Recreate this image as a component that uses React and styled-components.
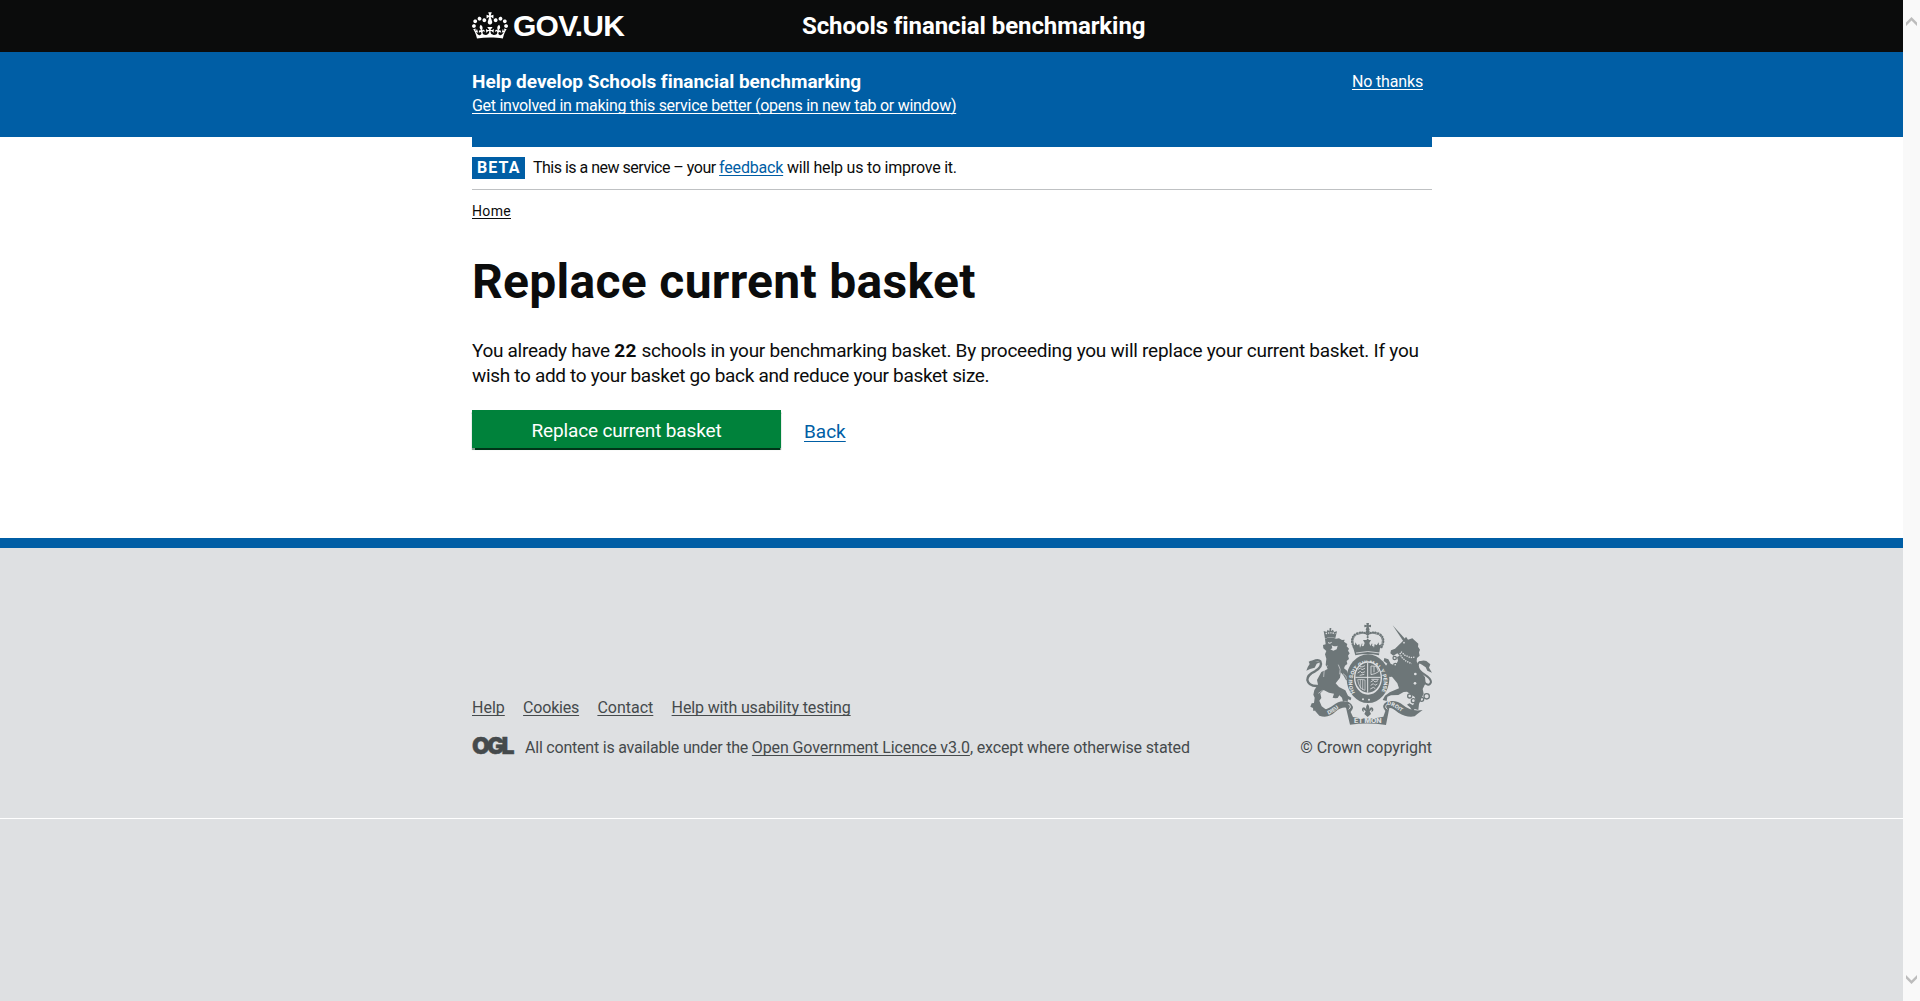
import React from 'react';
import styled, { createGlobalStyle } from 'styled-components';

const GlobalStyle = createGlobalStyle`
  * { box-sizing: border-box; }
  body { margin: 0; background: #dee0e2; color: #0b0c0c; font-family: Roboto, "Liberation Sans", sans-serif; overflow: hidden; }
  h1, p, ul { margin: 0; padding: 0; }
`;

const Window = styled.div`
  display: grid;
  grid-template-columns: 1fr 17px;
  height: 1001px;
`;

const Page = styled.div`
  display: flex;
  flex-direction: column;
  background: #dee0e2;
  min-width: 0;
`;

const T = styled.span`
  letter-spacing: ${p => p.$ls || 0}px;
  white-space: nowrap;
`;

const Link = styled.a`
  color: ${p => p.$color || '#005ea5'};
  letter-spacing: ${p => p.$ls || 0}px;
  text-decoration: underline;
  text-decoration-thickness: 1px;
  text-underline-offset: ${p => p.$offset || 2}px;
  text-decoration-skip-ink: none;
  white-space: nowrap;
`;

const Header = styled.header`
  display: flex;
  flex: none;
  height: 52px;
  padding-left: 472px;
  background: #0b0c0c;
  color: #fff;
`;

const Brand = styled.a`
  display: flex;
  width: 330px;
  padding-top: 12px;
  gap: 5px;
  font: bold 30px/27px "Liberation Sans", Arial, sans-serif;
  letter-spacing: -0.75px;
`;

const ServiceName = styled.div`
  padding-top: 11px;
  font-size: 24px;
  line-height: 30px;
  font-weight: 700;
  letter-spacing: -0.08px;
`;

const Recruitment = styled.section`
  display: flex;
  flex: none;
  justify-content: space-between;
  height: 85px;
  padding: 18px 480px 0 472px;
  background: #005ea5;
  color: #fff;
  font-size: 16px;
  line-height: 24px;
`;

const RecruitmentTitle = styled.div`
  font-size: 19px;
  font-weight: 700;
  letter-spacing: -0.01px;
`;

const Main = styled.main`
  flex: none;
  height: 401px;
  padding: 0 471px 0 472px;
  background: #fff;
`;

const BlueBar = styled.div`
  height: 10px;
  background: #005ea5;
`;

const Phase = styled.div`
  display: flex;
  align-items: center;
  gap: 8px;
  height: 43px;
  border-bottom: 1px solid #bfc1c3;
  font-size: 16px;
  line-height: 22px;
`;

const Tag = styled.strong`
  width: 53px;
  height: 22px;
  padding-left: 5px;
  background: #005ea5;
  color: #fff;
  letter-spacing: 1.1px;
`;

const Crumbs = styled.nav`
  padding-top: 11px;
  font-size: 14px;
  line-height: 20px;
`;

const Title = styled.h1`
  padding-top: 36px;
  font-size: 48px;
  line-height: 50px;
  letter-spacing: 0.3px;
`;

const Body = styled.p`
  padding-top: 31px;
  font-size: 19px;
  line-height: 25px;
`;

const Actions = styled.div`
  display: flex;
  gap: 23px;
  padding-top: 22px;
  font-size: 19px;
`;

const Button = styled.button`
  width: 309px;
  height: 38px;
  padding: 3px 0 0;
  border: 0;
  background: #00823b;
  box-shadow: 0 1.5px 1px #003418;
  color: #fff;
  font: inherit;
  letter-spacing: -0.15px;
`;

const BackSlot = styled.div`
  padding-top: 9px;
  line-height: 25px;
`;

const Footer = styled.footer`
  display: flex;
  flex: none;
  justify-content: space-between;
  height: 281px;
  padding: 75px 471px 0 472px;
  border-top: 10px solid #005ea5;
  border-bottom: 1px solid #fff;
  background: #dee0e2;
  color: #454a4c;
  font-size: 16px;
  line-height: 20px;
`;

const FooterMeta = styled.div`
  padding-top: 75px;
`;

const FooterLinks = styled.div`
  display: flex;
  gap: 18.3px;
`;

const Licence = styled.div`
  display: flex;
  padding-top: 20px;
`;

const Ogl = styled.span`
  width: 53px;
  font: 900 23px/17px Inter, Roboto, sans-serif;
  letter-spacing: -2.9px;
  -webkit-text-stroke: 0.4px #454a4c;
`;

const Copyright = styled.div`
  display: flex;
  flex-direction: column;
  align-items: flex-end;
  gap: 12px;
`;

const Scrollbar = styled.div`
  display: flex;
  flex-direction: column;
  justify-content: space-between;
  align-items: center;
  padding: 17px 0;
  background: #f9f9f9;
`;

const Crown = () => (
  <svg width="36" height="27" viewBox="0 0 132 97" fill="#fff" aria-hidden="true">
    <path d="M25 30.2c3.5 1.5 7.7-.2 9.1-3.7 1.5-3.6-.2-7.8-3.9-9.2-3.6-1.4-7.6.3-9.1 3.9-1.4 3.5.3 7.5 3.9 9zM9 39.5c3.6 1.5 7.8-.2 9.2-3.7 1.5-3.6-.2-7.8-3.9-9.1-3.6-1.5-7.6.2-9.1 3.8-1.4 3.5.3 7.5 3.8 9zM4.4 57.2c3.5 1.5 7.7-.2 9.1-3.8 1.5-3.6-.2-7.7-3.9-9.1-3.5-1.5-7.6.3-9.1 3.8-1.4 3.5.3 7.6 3.9 9.1zm38.3-21.4c3.5 1.5 7.7-.2 9.1-3.8 1.5-3.6-.2-7.7-3.9-9.1-3.6-1.5-7.6.3-9.1 3.8-1.3 3.6.4 7.7 3.9 9.1zm64.4-5.6c-3.6 1.5-7.8-.2-9.1-3.7-1.5-3.6.2-7.8 3.8-9.2 3.6-1.4 7.7.3 9.2 3.9 1.3 3.5-.4 7.5-3.9 9zm15.9 9.3c-3.6 1.5-7.7-.2-9.1-3.7-1.5-3.6.2-7.8 3.7-9.1 3.6-1.5 7.7.2 9.2 3.8 1.5 3.5-.3 7.5-3.8 9zm4.7 17.7c-3.6 1.5-7.8-.2-9.2-3.8-1.5-3.6.2-7.7 3.9-9.1 3.6-1.5 7.7.3 9.2 3.8 1.3 3.5-.4 7.6-3.9 9.1zM89.3 35.8c-3.6 1.5-7.8-.2-9.2-3.8-1.4-3.6.2-7.7 3.9-9.1 3.6-1.5 7.7.3 9.2 3.8 1.4 3.6-.3 7.7-3.9 9.1zM69.7 17.7l8.9 4.7V9.3l-8.9 2.8c-.2-.3-.5-.6-.9-.9L72.4 0H59.6l3.5 11.2c-.3.3-.6.5-.9.9l-8.8-2.8v13.1l8.8-4.7c.3.3.6.7.9.9l-5 15.4v.1c-.2.8-.4 1.6-.4 2.4 0 4.1 3.1 7.5 7 8.1h.2c.3 0 .7.1 1 .1.4 0 .7 0 1-.1h.2c4-.6 7.1-4.1 7.1-8.1 0-.8-.1-1.7-.4-2.4V34l-5.1-15.4c.4-.2.7-.6 1-.9zM66 92.8c16.9 0 32.8 1.1 47.1 3.2 4-16.9 8.9-26.7 14-33.5l-9.6-3.4c1 4.9 1.1 7.2 0 10.2-1.5-1.4-3-4.3-4.2-8.7L108.6 76c2.8-2 5-3.2 7.5-3.3-4.4 9.4-10 11.9-13.6 11.2-4.3-.8-6.3-4.6-5.6-7.9 1-4.7 5.7-5.9 8-.5 4.3-8.7-3-11.4-7.6-8.8 7.1-7.2 7.9-13.5 2.1-21.1-8 6.1-8.1 12.3-4.5 20.8-4.7-5.4-12.1-2.5-9.5 6.2 3.4-5.2 7.9-2 7.2 3.1-.6 4.3-6.4 7.8-13.5 7.2-10.3-.9-10.9-8-11.2-13.8 2.5-.5 7.1 1.8 11 7.3L80.2 60c-4.1 4.4-8 5.3-12.3 5.4 1.4-4.4 8-11.6 8-11.6H55.5s6.4 7.2 7.9 11.6c-4.2-.1-8-1-12.3-5.4l1.4 16.4c3.9-5.5 8.5-7.7 10.9-7.3-.3 5.8-.9 12.8-11.1 13.8-7.2.6-12.9-2.9-13.5-7.2-.7-5 3.8-8.3 7.1-3.1 2.7-8.7-4.6-11.6-9.4-6.2 3.7-8.5 3.6-14.7-4.6-20.8-5.8 7.6-5 13.9 2.2 21.1-4.7-2.6-11.9.1-7.7 8.8 2.3-5.5 7.1-4.2 8.1.5.7 3.3-1.3 7.1-5.7 7.9-3.5.7-9-1.8-13.5-11.2 2.5.1 4.7 1.3 7.5 3.3l-4.7-15.4c-1.2 4.4-2.7 7.2-4.3 8.7-1.1-3-.9-5.3 0-10.2l-9.5 3.4c5 6.9 9.9 16.7 14 33.5 14.8-2.1 30.8-3.2 47.7-3.2z" />
  </svg>
);

const ink = '#6d7678';
const paper = '#dee0e2';

const Crest = () => (
  <svg width="126" height="103" viewBox="79 38 378 309" fill={ink} aria-hidden="true">
    {/* royal crown */}
    <path d="M260 38h8l-1 7 7-2v8l-7-2 3 10h-12l3-10-7 2v-8l7 2z" />
    <circle cx="264" cy="64" r="6" />
    <path d="M264 72Q250 62 230 70Q207 84 224 114M264 72Q278 62 298 70Q321 84 304 114" fill="none" stroke={ink} strokeWidth="6" strokeLinecap="round" strokeDasharray="2 6" />
    <path d="M264 72Q250 64 231 73Q211 86 227 114M264 72Q278 64 297 73Q317 86 301 114" fill="none" stroke={ink} strokeWidth="2.5" />
    <path d="M264 72V96" fill="none" stroke={ink} strokeWidth="6" strokeLinecap="round" strokeDasharray="1 7" />
    <path d="M221 114L218 101l8 4 1-9 6 9 6-4 2 11 6-13 5 8 3-9-5-9h24l-5 9 3 9 5-8 6 13 2-11 6 4 6-9 1 9 8-4-5 13-3 21Q264 127 227 135z" />
    <path d="M229 128Q264 119 301 128" fill="none" stroke={paper} strokeWidth="2.5" />
    <circle cx="249" cy="105" r="3" fill={paper} /><circle cx="280" cy="105" r="3" fill={paper} />

    {/* lion */}
    <path d="M132 62l9 3 3-7 5 5 1-10h5l-1 9 6-4 3 7 9-2-5 20q-16-5-31 2z" />
    <path d="M138 70q14-5 29 0" fill="none" stroke={paper} strokeWidth="4" strokeDasharray="4 3" />
    <path d="M136 86q16-8 33-1l9-1 9 5 8-1-2 6 10 7-2 7 7 7-3 6 5 8-5 7 3 10-7 6 2 9-7 5-3 8 9 7 3 10 10 2-4 6 6 5-8 2-2 5-8-2-7-13-9-10-2 16-13 17 10 11 19 10 8 16 10 6-2 8-8-3-1 8-8-4-6 3-3-12-8-7-5 8-7 1-8-2 4-12-15-3-16-8-10 10 3 14-6 8 7 17 14 10-9 8-9-5-5 7-9-8-7 2-1-9-8-4 4-10 7-1 2-16-4-9 3-14 11-16-3-14 13-24 19-9-6-12 2-19-4-13 4-10-9-8-1-10 8-2z" />
    <path d="M113 227Q87 228 83 209Q83 193 106 183Q130 169 122 153Q116 146 101 153" fill="none" stroke={ink} strokeWidth="7" strokeLinecap="round" />
    <path d="M80 181q5-14 10-20l-3-7q12-6 20-1l17 1-13 6-6 12-14 4z" />
    <path d="M156 104q6 7 18 2l-3 11-10 4-9-4 6-3z" fill={paper} />
    <path d="M145 97q6 4 11-1" fill="none" stroke={paper} strokeWidth="3" />
    <path d="M143 165q-14 20-11 35M176 163q9 14 4 29M116 249l13-9M190 190q12 6 11 17" fill="none" stroke={paper} strokeWidth="2" />

    {/* unicorn */}
    <path d="M339 45l41 45-8 4z" />
    <path d="M372 90l7-11 6 9 13-4 9 8 9 8-1 9 6 9-3 8 2 10-8 7-1 9 5 17 4 9 16 23 2 17-9 18 3 14-6 12-8 19-2 18-11-3-6 8-8-13-9-8 7-4 11 6 8-15-3-10-23-16-10 1-16 9-22 1-11 4-2 13-12-3 7-13 14-10 28-12-5-15-16-20-7 1-13-9-7 13-9 6-7-4 10-7 4-12-11-7-9-15-11-3 4-6 12 3 7-3 18 12 5-8-11-8 2-9 12 4 7 13 14 6 8-15-3-11 8-4-7-7-12 7-9-7 2-9 12-5z" />
    <path d="M429 213Q449 232 454 215Q453 204 435 193Q411 178 415 161Q418 151 431 157" fill="none" stroke={ink} strokeWidth="6" />
    <path d="M416 157q10-9 24-5l12 10-4 10 9 15-14-6-5-10-11-8z" />
    <path d="M361 128l5 13 14 12 16 7M364 124l12 11 17 7 14-2" fill="none" stroke={paper} strokeWidth="4" strokeDasharray="4 3" />
    <circle cx="373" cy="97" r="2.5" fill={paper} />
    <g fill="none" stroke={ink} strokeWidth="4">
      <circle cx="390" cy="257" r="6" /><circle cx="401" cy="271" r="6" /><circle cx="426" cy="267" r="6" /><circle cx="441" cy="258" r="8" />
      <circle cx="345" cy="143" r="5" /><circle cx="347" cy="164" r="5" /><circle cx="337" cy="186" r="5" />
    </g>
    <circle cx="407" cy="191" r="4" fill={paper} /><circle cx="406" cy="219" r="4" fill={paper} />

    {/* garter */}
    <ellipse cx="265" cy="205" rx="64" ry="73" />
    <ellipse cx="265" cy="203" rx="42" ry="50" fill={paper} />
    <path id="garter-path" d="M226 247A47 55 0 1 1 304 247" fill="none" />
    <text fontFamily="Inter, sans-serif" fontWeight="800" fontSize="15.5" fill={paper}><textPath href="#garter-path">HONI SOIT QUI MAL Y PENSE</textPath></text>
    <ellipse cx="265" cy="202" rx="38" ry="45" />
    <path d="M264 158v89M227 201h76" stroke={paper} strokeWidth="3" />
    <path d="M234 178l8-5 5 5 9-4M234 188l8-5 5 5 9-4M240 167l7 3 9-4M240 195l14-3M273 215l8-5 5 5 9-4M273 225l8-5 5 5 7-4M272 236l9-5 6 4M275 207h22M274 167v26q13-2 23-9l-7-16zM283 168v18" fill="none" stroke={paper} strokeWidth="2.5" />
    <path d="M234 208q16-2 22 1v31q-18-4-22-32zM242 208v27M249 208v31" fill="none" stroke={paper} strokeWidth="2" />
    <circle cx="250" cy="267" r="3" fill={paper} /><circle cx="268" cy="268" r="3" fill={paper} />

    {/* motto ribbon */}
    <path d="M104 299Q136 305 162 284Q181 267 207 275Q229 288 213 305L220 320Q264 330 311 319L317 302Q302 285 321 274Q350 267 370 284Q394 305 429 299L413 311L405 318Q382 323 356 307Q338 291 329 293L319 344Q264 336 211 343L199 292Q185 290 169 303Q146 326 119 316z" />
    <path d="M207 281q10 9 0 16M323 281q-10 9 0 16" fill="none" stroke={paper} strokeWidth="3" />
    <path id="motto-left" d="M146 313Q164 306 177 293Q186 287 204 285" fill="none" />
    <path id="motto-right" d="M322 284Q338 284 350 295Q365 308 392 313" fill="none" />
    <g fontFamily="Inter, sans-serif" fontWeight="800" fontSize="16" fill={paper}>
      <text><textPath href="#motto-left">DIEU</textPath></text>
      <text x="223" y="339" fontSize="18" textLength="83" lengthAdjust="spacingAndGlyphs">ET MON</text>
      <text><textPath href="#motto-right">DROIT</textPath></text>
    </g>
    <ellipse cx="264" cy="299" rx="23" ry="21" fill={paper} />
    <path d="M264 281q8 9 3 19 5-13 12-8 6 8-4 13l2-8-7 6 4 8-10 9-10-9 4-8-7-6 2 8q-10-5-4-13 7-5 12 8-5-10 3-19z" />
  </svg>
);

const Chevron = ({ down }) => (
  <svg width="11" height="9" viewBox="0 0 11 9" fill="#bcbcbc" aria-hidden="true">
    <path d={down ? 'M0 0L5.5 5.5L11 0V3.5L5.5 9L0 3.5z' : 'M0 9L5.5 3.5L11 9V5.5L5.5 0L0 5.5z'} />
  </svg>
);

export default function App() {
  return (
    <Window>
      <GlobalStyle />
      <Page>
        <Header>
          <Brand><Crown /><span>GOV.UK</span></Brand>
          <ServiceName>Schools financial benchmarking</ServiceName>
        </Header>
        <Recruitment>
          <div>
            <RecruitmentTitle>Help develop Schools financial benchmarking</RecruitmentTitle>
            <Link $color="#fff" $ls={-0.28}>Get involved in making this service better (opens in new tab or window)</Link>
          </div>
          <Link $color="#fff" $ls={-0.16}>No thanks</Link>
        </Recruitment>
        <Main>
          <BlueBar />
          <Phase>
            <Tag>BETA</Tag>
            <span><T $ls={-0.5}>This is a new service – your </T><Link $ls={-0.19}>feedback</Link><T $ls={-0.21}> will help us to improve it.</T></span>
          </Phase>
          <Crumbs><Link $color="#0b0c0c" $ls={0.33}>Home</Link></Crumbs>
          <Title>Replace current basket</Title>
          <Body>
            <T $ls={-0.31}>You already have </T><b><T $ls={0.5}>22</T></b><T $ls={-0.255}> schools in your benchmarking basket. By proceeding you will replace your current basket. If you</T>
            <br />
            <T $ls={-0.32}>wish to add to your basket go back and reduce your basket size.</T>
          </Body>
          <Actions>
            <Button>Replace current basket</Button>
            <BackSlot><Link $offset={3}>Back</Link></BackSlot>
          </Actions>
        </Main>
        <Footer>
          <FooterMeta>
            <FooterLinks>
              <Link $color="#454a4c">Help</Link>
              <Link $color="#454a4c" $ls={-0.2}>Cookies</Link>
              <Link $color="#454a4c">Contact</Link>
              <Link $color="#454a4c" $ls={-0.14}>Help with usability testing</Link>
            </FooterLinks>
            <Licence>
              <Ogl>OGL</Ogl>
              <span><T $ls={-0.21}>All content is available under the </T><Link $color="#454a4c" $ls={-0.11}>Open Government Licence v3.0</Link><T $ls={-0.14}>, except where otherwise stated</T></span>
            </Licence>
          </FooterMeta>
          <Copyright>
            <Crest />
            <T $ls={-0.04}>© Crown copyright</T>
          </Copyright>
        </Footer>
      </Page>
      <Scrollbar><Chevron /><Chevron down /></Scrollbar>
    </Window>
  );
}
